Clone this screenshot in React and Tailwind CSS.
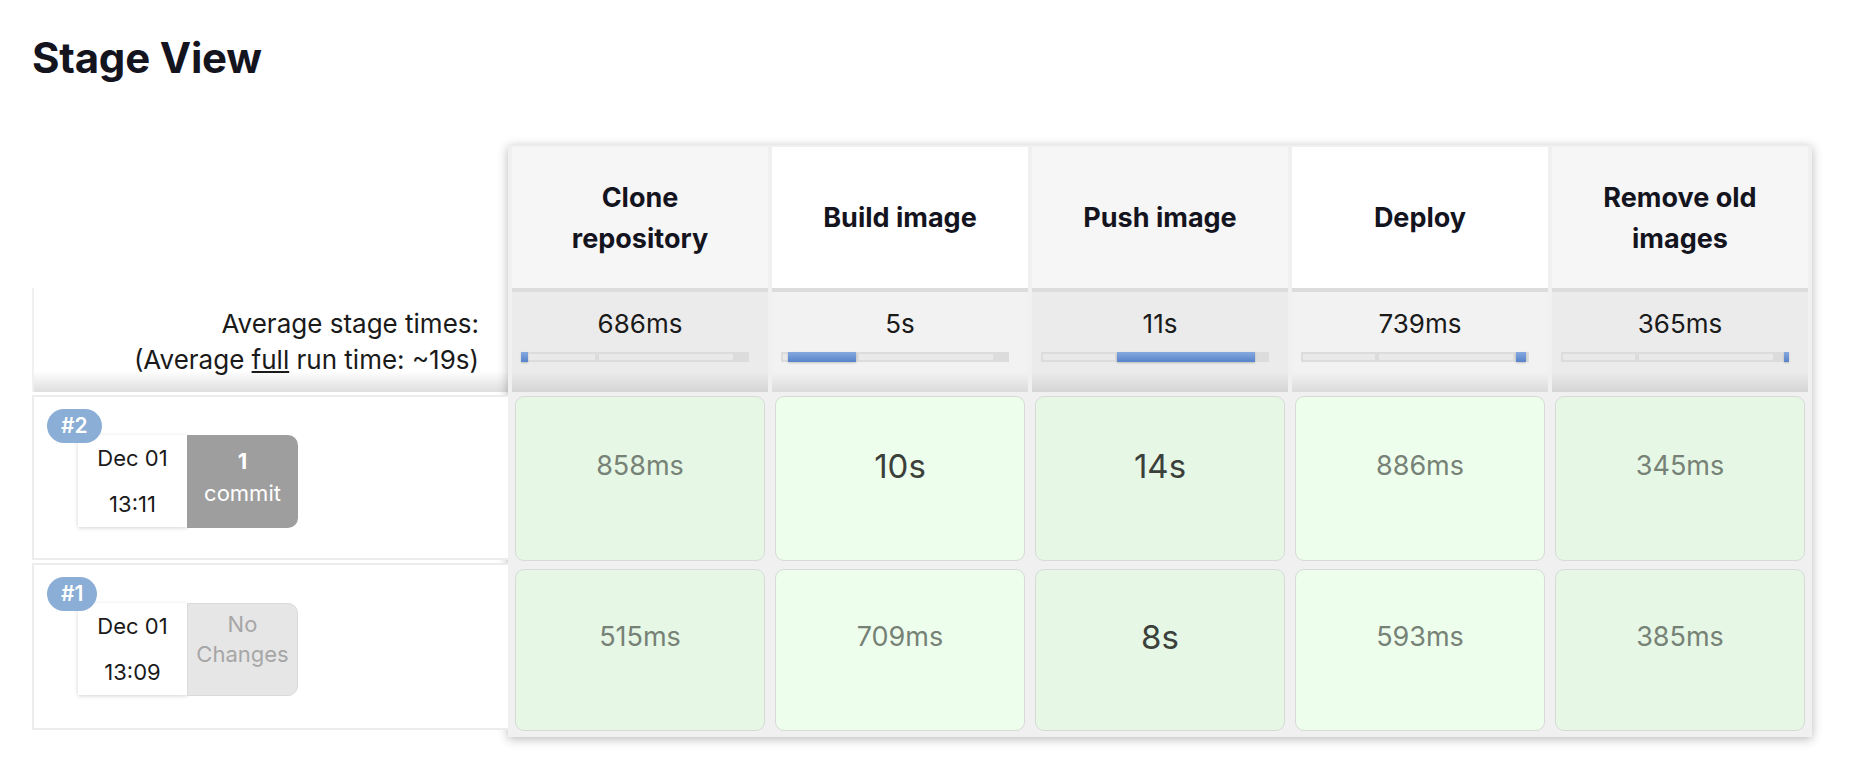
import React from "react";

const stages = [
  { name: ["Clone", "repository"], avg: "686ms", fill: [0, 7], runs: [{ t: "858ms" }, { t: "515ms" }] },
  { name: ["Build image"], avg: "5s", fill: [7, 68], runs: [{ t: "10s", big: true }, { t: "709ms" }] },
  { name: ["Push image"], avg: "11s", fill: [76, 138], runs: [{ t: "14s", big: true }, { t: "8s", big: true }] },
  { name: ["Deploy"], avg: "739ms", fill: [215, 10], runs: [{ t: "886ms" }, { t: "593ms" }] },
  { name: ["Remove old", "images"], avg: "365ms", fill: [223, 5], runs: [{ t: "345ms" }, { t: "385ms" }] },
];

const builds = [
  { id: "#2", date: "Dec 01", time: "13:11", commits: true },
  { id: "#1", date: "Dec 01", time: "13:09", commits: false },
];

const Bar = ({ fill }) => (
  <div className="relative ml-[9px] mt-[10px] h-[10px] w-[228px] bg-[#dcdcdc]">
    {/* track segments */}
    <div className="absolute left-[2px] top-[2px] h-[6px] w-[72px] bg-[#e9e9e9]" />
    <div className="absolute left-[78px] top-[2px] h-[6px] w-[134px] bg-[#e9e9e9]" />
    <div
      className="absolute top-0 h-[10px] bg-linear-to-b from-[#86a9e0] to-[#5883c9] shadow-[0_1px_2px_rgba(0,0,0,0.2)]"
      style={{ left: fill[0], width: fill[1] }}
    />
  </div>
);

const BuildRow = ({ b, h }) => (
  <div
    className="relative mt-[3px] border-y-2 border-l-2 border-[#ececec] bg-white"
    style={{ height: h }}
  >
    <div className="flex pl-[44px] pt-[38px]">
      <div className="w-[109px] h-[92px] bg-white text-center text-[22px] leading-[46px] text-[#1a1a1a] shadow-[0_1px_4px_rgba(0,0,0,0.18)]">
        <div>{b.date}</div>
        <div>{b.time}</div>
      </div>
      {b.commits ? (
        <div className="w-[111px] h-[93px] rounded-r-[10px] bg-[#9e9e9e] pt-[10px] text-center text-[22px] leading-[32px] text-white">
          <div className="font-bold">1</div>
          <div>commit</div>
        </div>
      ) : (
        <div className="w-[111px] h-[93px] rounded-r-[10px] border border-[#dadada] bg-[#e6e6e6] pt-[5px] text-center text-[22px] leading-[30px] text-[#a6a6a6]">
          <div>No</div>
          <div>Changes</div>
        </div>
      )}
    </div>
    <div className="absolute left-[13px] top-[12px] rounded-full bg-[#8aaed5] px-[14px] text-[21px] font-semibold leading-[34px] text-white">
      {b.id}
    </div>
  </div>
);

export default function App() {
  return (
    <div className="min-h-screen bg-white pl-[32px] pt-[37px] font-['Inter',sans-serif] text-[#14141f]">
      <h2 className="text-[42px] font-bold leading-none tracking-[-0.2px]">Stage View</h2>

      <div className="mt-[66px] flex items-start">
        {/* Left pane */}
        <div className="w-[476px] flex flex-col">
          <div className="h-[143px]" />
          <div className="h-[104px] border-l-2 border-[#f0f0f0] bg-linear-to-b from-white via-white via-80% to-[#dedede] pr-[29px] pt-[18px] text-right text-[26px] leading-[36px] text-[#1a1a1a]">
            <div>Average stage times:</div>
            <div>
              (Average <span className="underline underline-offset-2">full</span> run time: ~19s)
            </div>
          </div>
          <BuildRow b={builds[0]} h={165} />
          <BuildRow b={builds[1]} h={167} />
        </div>

        {/* Stage table */}
        <div className="w-[1304px] bg-[#f0f0f0] px-[4px] py-[2px] shadow-[0_2px_10px_rgba(0,0,0,0.28)]">
          <div className="grid grid-cols-5 gap-[4px]">
            {stages.map((s, i) => {
              const odd = i % 2 === 0;
              return (
                <div key={i} className="flex flex-col">
                  <div
                    className={`h-[141px] flex flex-col items-center justify-center px-[16px] text-center text-[27px] font-bold leading-[41px] ${
                      odd ? "bg-[#f6f6f6]" : "bg-white"
                    }`}
                  >
                    {s.name.map((n) => (
                      <div key={n}>{n}</div>
                    ))}
                  </div>
                  <div
                    className={`h-[104px] border-t-4 border-[#dcdcdc] pt-[14px] ${
                      odd
                        ? "bg-linear-to-b from-[#ebebeb] via-[#ebebeb] via-80% to-[#d5d5d5]"
                        : "bg-linear-to-b from-[#f2f2f2] via-[#f2f2f2] via-80% to-[#dbdbdb]"
                    }`}
                  >
                    <div className="text-center text-[26px] leading-[36px] text-[#1a1a1a]">{s.avg}</div>
                    <Bar fill={s.fill} />
                  </div>
                  {s.runs.map((r, j) => (
                    <div
                      key={j}
                      className={`mx-[3px] rounded-[9px] border border-[#d6dbd6] text-center leading-[40px] ${
                        j === 0 ? "mt-[4px] h-[165px] pt-[49px]" : "mt-[8px] mb-[4px] h-[162px] pt-[47px]"
                      } ${odd ? "bg-[#e6f7e5]" : "bg-[#eefeec]"} ${
                        r.big ? "text-[33px] text-[#3b403b]" : "text-[27px] text-[#778277]"
                      }`}
                    >
                      {r.t}
                    </div>
                  ))}
                </div>
              );
            })}
          </div>
        </div>
      </div>
    </div>
  );
}
